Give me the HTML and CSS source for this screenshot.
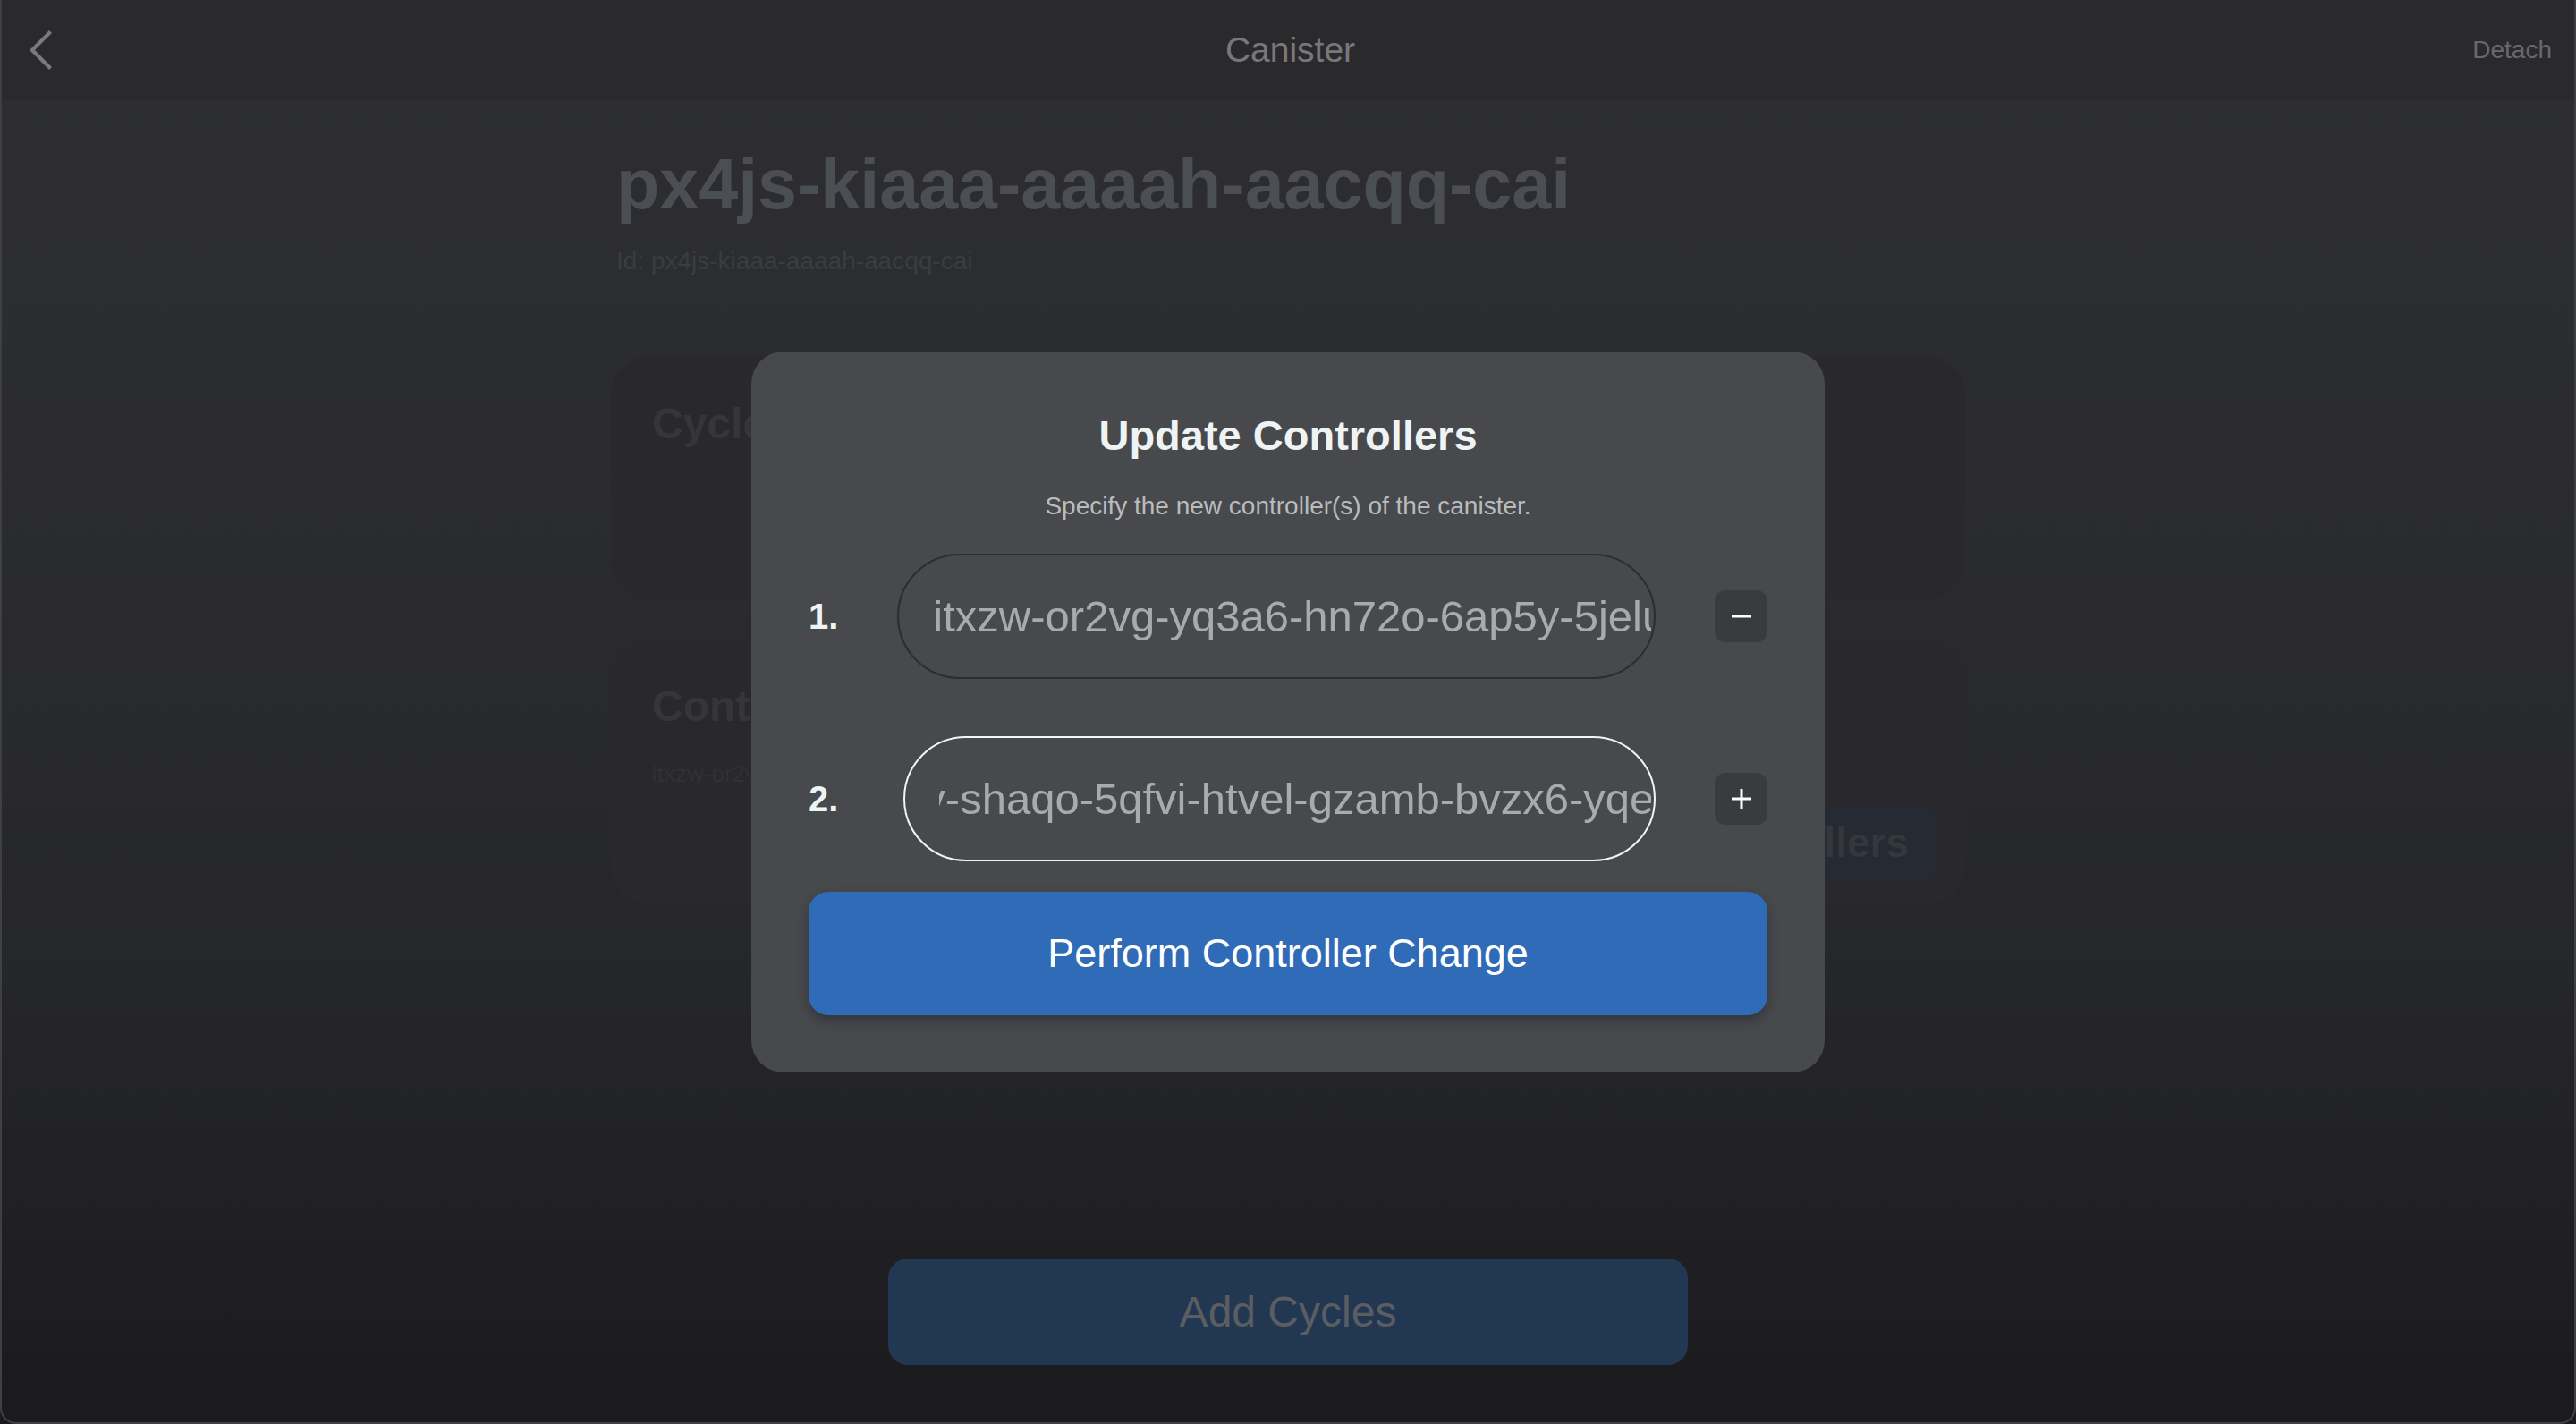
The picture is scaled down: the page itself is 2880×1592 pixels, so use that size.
FILE: index.html
```html
<!DOCTYPE html>
<html lang="en">
<head>
<meta charset="utf-8">
<title>Canister</title>
<link rel="stylesheet" href="styles.css">
</head>
<body>
<div class="app">
  <header class="topbar">
    <button class="back" aria-label="Back">
      <svg width="26" height="44" viewBox="0 0 26 44"><polyline points="23,3 4,22 23,41" fill="none" stroke="currentColor" stroke-width="4.2" stroke-linecap="square"/></svg>
    </button>
    <h1 class="page-title">Canister</h1>
    <span class="detach">Detach</span>
  </header>

  <main class="content">
    <h2 class="canister-name">px4js-kiaaa-aaaah-aacqq-cai</h2>
    <p class="canister-id">Id: px4js-kiaaa-aaaah-aacqq-cai</p>

    <section class="card card-cycles">
      <h3 class="card-title">Cycles</h3>
    </section>

    <section class="card card-controllers">
      <h3 class="card-title">Controllers</h3>
      <p class="card-text">itxzw-or2vg-yq3a6-hn72o-6ap5y-5jelu-shaqo-5qfvi-htvel-gzamb-bvzx6-yqe</p>
      <div class="card-actions">
        <button class="card-btn">Update Controllers</button>
      </div>
    </section>

    <button class="add-cycles">Add Cycles</button>
  </main>
</div>

<div class="backdrop">
  <div class="modal">
    <h2 class="modal-title">Update Controllers</h2>
    <p class="modal-sub">Specify the new controller(s) of the canister.</p>
    <div class="ctrl-list">
      <div class="ctrl-row">
        <span class="ctrl-index">1.</span>
        <div class="ctrl-field">
          <div class="ctrl-value"><span>itxzw-or2vg-yq3a6-hn72o-6ap5y-5jelu-qfdsa-xbrgb-cefsb</span></div>
        </div>
        <button class="ctrl-btn" aria-label="Remove">
          <svg width="26" height="26" viewBox="0 0 26 26"><line x1="2" y1="13" x2="24" y2="13" stroke="#ffffff" stroke-width="3"/></svg>
        </button>
      </div>
      <div class="ctrl-row">
        <span class="ctrl-index ctrl-index-wide">2.</span>
        <div class="ctrl-field focused">
          <div class="ctrl-value"><span class="scrolled">v-shaqo-5qfvi-htvel-gzamb-bvzx6-yqe</span></div>
        </div>
        <button class="ctrl-btn" aria-label="Add">
          <svg width="26" height="26" viewBox="0 0 26 26"><line x1="2" y1="13" x2="24" y2="13" stroke="#ffffff" stroke-width="3"/><line x1="13" y1="2" x2="13" y2="24" stroke="#ffffff" stroke-width="3"/></svg>
        </button>
      </div>
    </div>
    <button class="submit">Perform Controller Change</button>
  </div>
</div>
</body>
</html>
```

FILE: styles.css
```css
html, body {
  margin: 0;
  padding: 0;
}

body {
  width: 2880px;
  height: 1592px;
  overflow: hidden;
  font-family: "Liberation Sans", Arial, sans-serif;
  background: #2d2d32;
}

.app {
  height: 1592px;
  box-sizing: border-box;
  border: 2px solid #6b6b71;
  border-top: 0;
  border-radius: 0 0 18px 18px;
  overflow: hidden;
  display: flex;
  flex-direction: column;
  background: linear-gradient(180deg, #4d4e55 0%, #46474e 45%, #3f4046 70%, #2d2d32 100%);
}

/* Top bar */
.topbar {
  height: 112px;
  flex: none;
  display: grid;
  grid-template-columns: 1fr auto 1fr;
  align-items: center;
  padding: 0 25px 0 30px;
  background: #46464b;
}

.back {
  justify-self: start;
  border: 0;
  padding: 0;
  background: none;
  color: #cbcbd2;
  display: flex;
}

.page-title {
  margin: 0;
  font-size: 39px;
  font-weight: 400;
  color: #c8c8cf;
}

.detach {
  justify-self: end;
  font-size: 28px;
  color: #adadb4;
}

/* Page content */
.content {
  width: 1514px;
  margin: 0 auto;
  display: flex;
  flex-direction: column;
}

.canister-name {
  margin: 49px 0 0 6px;
  font-size: 79px;
  line-height: 90px;
  font-weight: 700;
  color: #7d828a;
}

.canister-id {
  margin: 24px 0 0 6px;
  font-size: 28px;
  line-height: 34px;
  color: #61646b;
}

.card {
  box-sizing: border-box;
  border-radius: 40px;
  background: #43444b;
}

.card-cycles {
  margin-top: 90px;
  height: 270px;
  padding: 46px;
}

.card-controllers {
  margin-top: 47px;
  height: 294px;
  padding: 45px 30px 27px 46px;
  display: flex;
  flex-direction: column;
}

.card-title {
  margin: 0;
  font-size: 48px;
  line-height: 58px;
  font-weight: 700;
  color: #585a61;
}

.card-text {
  margin: 30px 0 0;
  font-size: 26px;
  line-height: 32px;
  color: #505258;
  white-space: nowrap;
  overflow: hidden;
}

.card-actions {
  margin-top: 19px;
  display: flex;
  justify-content: flex-end;
}

.card-btn {
  height: 83px;
  padding: 0 33px;
  border: 0;
  border-radius: 20px;
  background: #3e4655;
  color: #575c64;
  font-family: inherit;
  font-size: 46px;
  font-weight: 700;
}

.add-cycles {
  align-self: center;
  margin-top: 397px;
  width: 894px;
  height: 119px;
  border: 0;
  border-radius: 22px;
  background: #3a5c87;
  color: #969ba3;
  font-family: inherit;
  font-size: 48px;
}

/* Modal */
.backdrop {
  position: fixed;
  inset: 0;
  background: rgba(0, 0, 0, 0.4);
  display: flex;
  align-items: center;
  justify-content: center;
}

.modal {
  width: 1200px;
  box-sizing: border-box;
  padding: 66px 64px 64px;
  border-radius: 36px;
  background: #48494d;
  display: flex;
  flex-direction: column;
}

.modal-title {
  margin: 0;
  text-align: center;
  font-size: 47px;
  line-height: 56px;
  font-weight: 700;
  color: #eef3f3;
}

.modal-sub {
  margin: 34px 0 0;
  text-align: center;
  font-size: 28px;
  line-height: 34px;
  color: #b9bcbd;
}

.ctrl-list {
  margin-top: 36px;
  display: flex;
  flex-direction: column;
  gap: 64px;
}

.ctrl-row {
  display: flex;
  align-items: center;
  gap: 66px;
}

.ctrl-index {
  font-size: 40px;
  font-weight: 700;
  color: #eef3f3;
}

.ctrl-index-wide {
  padding-right: 7px;
}

.ctrl-field {
  flex: 1;
  min-width: 0;
  height: 140px;
  box-sizing: border-box;
  border: 2px solid #2c2d31;
  border-radius: 70px;
  padding: 0 3px 0 38px;
  display: flex;
  align-items: center;
}

.ctrl-field.focused {
  border-color: #f4f4f4;
}

.ctrl-value {
  flex: 1;
  min-width: 0;
  overflow: hidden;
  white-space: nowrap;
  font-size: 49px;
  line-height: 60px;
  color: #a7acab;
}

.ctrl-value span {
  display: inline-block;
}

.ctrl-value .scrolled {
  margin-left: -18px;
}

.ctrl-btn {
  width: 59px;
  height: 58px;
  flex: none;
  border: 0;
  padding: 0;
  border-radius: 12px;
  background: #393b3e;
  display: flex;
  align-items: center;
  justify-content: center;
}

.submit {
  margin-top: 34px;
  height: 138px;
  border: 0;
  border-radius: 22px;
  background: #306bb8;
  color: #ffffff;
  font-family: inherit;
  font-size: 45px;
  box-shadow: 0 6px 14px rgba(0, 0, 0, 0.28);
}
```
